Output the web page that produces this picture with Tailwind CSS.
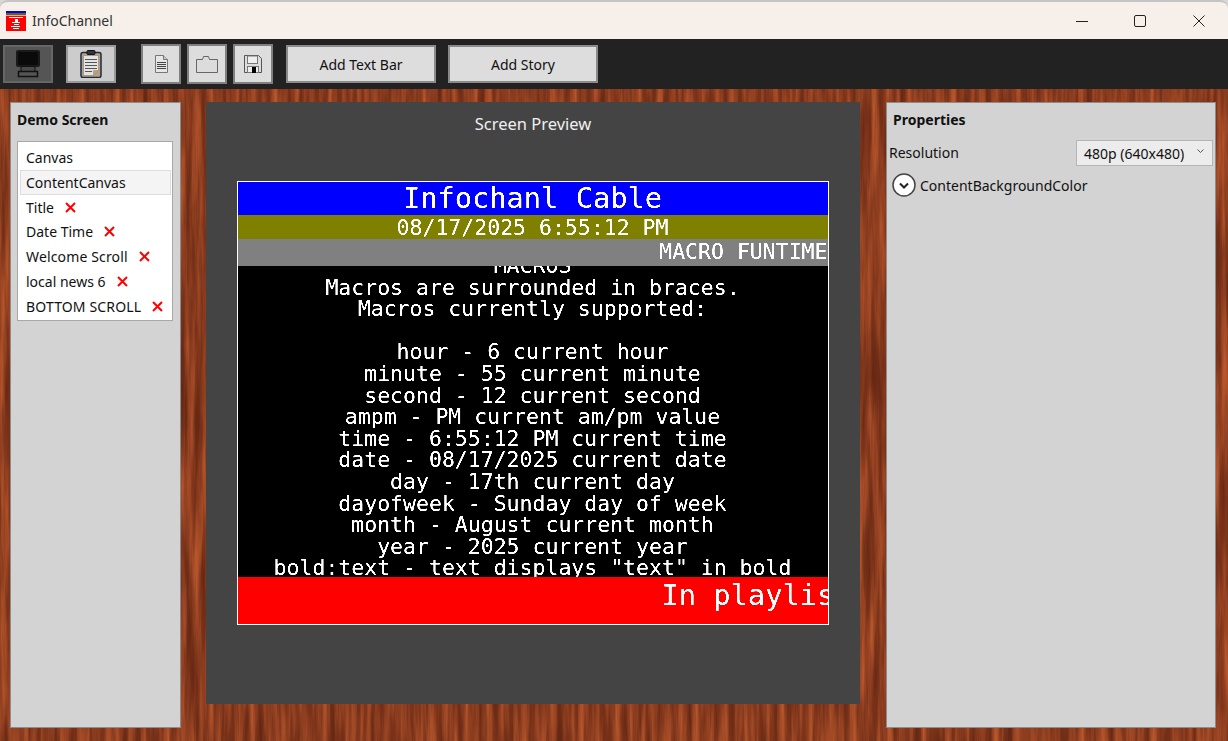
<!DOCTYPE html>
<html lang="en">
<head>
  <meta charset="UTF-8" />
  <title>InfoChannel</title>
  <script src="https://cdn.jsdelivr.net/npm/@tailwindcss/browser@4"></script>
</head>
<body class="bg-[#d8d8d8] w-[1228px] h-[741px] overflow-hidden font-['Noto_Sans',sans-serif] text-[14px] text-[#111]">
  <!-- hard edged text for the preview, it is a bitmap font in the real app -->
  <svg class="absolute w-0 h-0">
    <filter id="px" x="0" y="0" width="100%" height="100%" color-interpolation-filters="sRGB">
      <feComponentTransfer><feFuncA type="linear" slope="3" intercept="-0.9"/></feComponentTransfer>
    </filter>
  </svg>

  <!-- title bar -->
  <div class="h-[39px] bg-[#f7f0ea] rounded-t-lg border-t-2 border-[#c4c4c4] flex items-center">
    <svg class="ml-[6px] w-[20px] h-[20px]" viewBox="0 0 20 20" shape-rendering="crispEdges">
      <rect width="20" height="20" fill="#f00"/>
      <rect width="20" height="2" fill="#00f"/>
      <rect y="2" width="20" height="2" fill="#5f6a10"/>
      <rect y="4" width="20" height="1" fill="#fff" opacity=".6"/>
      <rect x="3" y="6" width="14" height="1" fill="#fff"/>
      <rect x="9" y="8" width="3" height="3" fill="#fff"/>
      <rect x="6" y="11" width="8" height="1" fill="#fff"/>
      <rect x="8" y="13" width="5" height="1" fill="#fff"/>
      <rect x="5" y="15" width="9" height="1" fill="#fff"/>
      <rect x="7" y="17" width="6" height="1" fill="#fff"/>
    </svg>
    <span class="ml-[6px] text-[14px] text-[#333]">InfoChannel</span>
    <div class="ml-auto mr-[6px] flex items-center">
      <svg class="w-[46px] h-[14px]" viewBox="0 0 46 14"><path d="M17 7.500h12" stroke="#222" fill="none"/></svg>
      <svg class="w-[46px] ml-[12px] h-[14px]" viewBox="0 0 46 14"><rect x="17.500" y="1.500" width="11" height="11" rx="1.500" stroke="#222" fill="none"/></svg>
      <svg class="w-[46px] ml-[13px] h-[14px]" viewBox="0 0 46 14"><path d="M17.500 1.500l11 11M28.500 1.500l-11 11" stroke="#222" fill="none"/></svg>
    </div>
  </div>

  <!-- toolbar -->
  <div class="h-[50px] bg-[#222] flex items-center pl-[3px] pb-[1px]">
    <button class="w-[50px] h-[38px] bg-[#555] border-2 border-[#666] flex items-center justify-center">
      <svg class="w-[26px] h-[28px]" viewBox="0 0 26 28">
        <rect x="2" y="1" width="22" height="15" rx="1" fill="#0a0a0a" stroke="#1a1a1a" stroke-width="2"/>
        <path d="M6 16.500h14v5h-14z" fill="#4a4a4a" stroke="#111"/>
        <rect x="3.500" y="21.500" width="19" height="5" fill="#555" stroke="#111" stroke-width="1.500"/>
      </svg>
    </button>
    <button class="ml-[13px] w-[50px] h-[38px] bg-[#ccc] border-2 border-[#999] flex items-center justify-center">
      <svg class="w-[22px] h-[28px]" viewBox="0 0 22 28">
        <rect x="1" y="2.500" width="20" height="25" rx="2" fill="#b9a27a" stroke="#1c2a44" stroke-width="1.500"/>
        <path d="M3.500 5.500h15v15l-5 5h-10z" fill="#e4e4e4" stroke="#777" stroke-width=".5"/>
        <rect x="7" y=".5" width="8" height="4" rx="1" fill="#334" stroke="#111"/>
        <path d="M5 9.500h12M5 12.500h12M5 15.500h12M5 18.500h12M5 21.500h7" stroke="#555"/>
        <path d="M13.500 25.500l5-5h-5z" fill="#c9a063" stroke="#888" stroke-width=".5"/>
      </svg>
    </button>
    <button class="ml-[25px] w-[40px] h-[40px] bg-[#ddd] border-2 border-[#808080] flex items-center justify-center">
      <svg class="w-[13px] h-[18px]" viewBox="0 0 13 18">
        <path d="M.5 .5h8l4 4v13h-12z" fill="#e6e6e6" stroke="#777"/>
        <path d="M8.500 .5v4h4" fill="#ccc" stroke="#777"/>
        <path d="M2 7.500h9M2 9.500h9M2 11.500h9M2 13.500h9" stroke="#444"/>
      </svg>
    </button>
    <button class="ml-[6px] w-[40px] h-[40px] bg-[#ddd] border-2 border-[#808080] flex items-center justify-center">
      <svg class="w-[22px] h-[18px]" viewBox="0 0 22 18">
        <path d="M.5 4.500h6l1-3h5l1 3h8v13h-21z" fill="#dcdcdc" stroke="#666"/>
      </svg>
    </button>
    <button class="ml-[6px] w-[40px] h-[40px] bg-[#ddd] border-2 border-[#808080] flex items-center justify-center">
      <svg class="w-[18px] h-[18px]" viewBox="0 0 18 18">
        <path d="M.5 .5h14l3 3v14h-17z" fill="#ddd" stroke="#555"/>
        <rect x="3.500" y="1" width="10" height="7.500" fill="#eee" stroke="#777"/>
        <rect x="3.500" y="11.500" width="11" height="6" fill="#eee" stroke="#777"/>
        <rect x="8" y="12" width="4" height="6" fill="#000"/>
      </svg>
    </button>
    <button class="ml-[13px] w-[150px] h-[38px] pt-[1px] bg-[#ddd] border-2 border-[#8a8a8a] text-[14px]">Add Text Bar</button>
    <button class="ml-[12px] w-[150px] h-[38px] pt-[1px] bg-[#ddd] border-2 border-[#8a8a8a] text-[14px]">Add Story</button>
  </div>

  <!-- main -->
  <div class="relative h-[652px] overflow-hidden">
    <svg class="absolute inset-0 w-full h-full" xmlns="http://www.w3.org/2000/svg">
      <filter id="wood" x="0" y="0" width="100%" height="100%" color-interpolation-filters="sRGB">
        <feTurbulence type="fractalNoise" baseFrequency="0.14 0.008" numOctaves="4" seed="7"/>
        <feColorMatrix type="matrix" values="1 0 0 0 0  1 0 0 0 0  1 0 0 0 0  0 0 0 0 1"/>
        <feComponentTransfer>
          <feFuncR type="table" tableValues="0.36 0.40 0.48 0.60 0.72 0.78"/>
          <feFuncG type="table" tableValues="0.15 0.16 0.20 0.27 0.34 0.38"/>
          <feFuncB type="table" tableValues="0.07 0.08 0.10 0.14 0.17 0.20"/>
        </feComponentTransfer>
      </filter>
      <rect width="100%" height="100%" filter="url(#wood)"/>
    </svg>

    <div class="relative flex pl-[10px] pt-[13px] h-full">
      <!-- left panel -->
      <div class="w-[171px] h-[626px] bg-[#d3d3d3] border border-[#8c8c8c] px-[6px] pt-[7px]">
        <div class="font-bold text-[14px] leading-[20px]">Demo Screen</div>
        <div class="mt-[11px] mr-[1px] bg-white border border-[#a8a8a8] px-[2px] pt-[3px] pb-[1px] h-[180px]">
          <div class="h-[25px] px-[6px] flex items-center">Canvas</div>
          <div class="h-[25px] px-[5px] flex items-center bg-[#f4f4f4] border border-[#ddd] mr-[-1px]">ContentCanvas</div>
          <div class="h-[24.600px] px-[6px] flex items-center gap-[11px]">Title <svg class="w-[11px] h-[11px]" viewBox="0 0 11 11"><path d="M1 1l9 9M10 1l-9 9" stroke="#f00" stroke-width="2"/></svg></div>
          <div class="h-[24.600px] px-[6px] flex items-center gap-[11px]">Date Time <svg class="w-[11px] h-[11px]" viewBox="0 0 11 11"><path d="M1 1l9 9M10 1l-9 9" stroke="#f00" stroke-width="2"/></svg></div>
          <div class="h-[24.800px] px-[6px] flex items-center gap-[11px]"><span class="tracking-[0.15px]">Welcome Scroll</span> <svg class="w-[11px] h-[11px]" viewBox="0 0 11 11"><path d="M1 1l9 9M10 1l-9 9" stroke="#f00" stroke-width="2"/></svg></div>
          <div class="h-[24.800px] px-[6px] flex items-center gap-[11px]">local news 6 <svg class="w-[11px] h-[11px]" viewBox="0 0 11 11"><path d="M1 1l9 9M10 1l-9 9" stroke="#f00" stroke-width="2"/></svg></div>
          <div class="h-[24.800px] px-[6px] flex items-center gap-[11px] whitespace-nowrap"><span class="tracking-[0.15px]">BOTTOM SCROLL</span> <svg class="w-[11px] h-[11px]" viewBox="0 0 11 11"><path d="M1 1l9 9M10 1l-9 9" stroke="#f00" stroke-width="2"/></svg></div>
        </div>
      </div>

      <!-- center panel -->
      <div class="ml-[25px] w-[654px] h-[602px] bg-[#444] flex flex-col items-center">
        <div class="mt-[11px] text-[#f0f0f0] text-[16.500px] leading-[22px]">Screen Preview</div>
        <div class="mt-[46px] ml-[-1px] w-[592px] h-[444px] border border-white bg-black flex flex-col text-white font-['DejaVu_Sans_Mono',monospace] overflow-hidden whitespace-nowrap">
          <div class="h-[33px] bg-[#00f] text-center text-[28.700px] leading-[33px] shrink-0"><div class="[filter:url(#px)]">Infochanl Cable</div></div>
          <div class="h-[24px] bg-[#808000] text-center text-[21.500px] leading-[25px] shrink-0"><div class="[filter:url(#px)]">08/17/2025 6:55:12 PM</div></div>
          <div class="h-[27px] bg-[#808080] text-right text-[21.500px] leading-[25px] shrink-0"><div class="[filter:url(#px)]">MACRO FUNTIME</div></div>
          <div class="h-[311px] shrink-0 overflow-hidden text-center text-[21.500px] leading-[21.600px]">
            <div class="mt-[-11px] [filter:url(#px)]">
              <div>MACROS</div>
              <div>Macros are surrounded in braces.</div>
              <div>Macros currently supported:</div>
              <div class="h-[21.600px]"></div>
              <div>hour - 6 current hour</div>
              <div>minute - 55 current minute</div>
              <div>second - 12 current second</div>
              <div>ampm - PM current am/pm value</div>
              <div>time - 6:55:12 PM current time</div>
              <div>date - 08/17/2025 current date</div>
              <div>day - 17th current day</div>
              <div>dayofweek - Sunday day of week</div>
              <div>month - August current month</div>
              <div>year - 2025 current year</div>
              <div>bold:text - text displays "text" in bold</div>
            </div>
          </div>
          <div class="flex-1 bg-[#f00] pl-[424px] text-[28.700px] leading-[34px] pt-[1px] overflow-hidden"><div class="[filter:url(#px)]">In playlist</div></div>
        </div>
      </div>

      <!-- right panel -->
      <div class="ml-[26px] w-[330px] h-[626px] bg-[#d3d3d3] border border-[#8c8c8c] pt-[7px]">
        <div class="font-bold text-[14px] leading-[20px] pl-[6px]">Properties</div>
        <div class="mt-[10px] flex items-start justify-between pl-[2px] pr-[2px]">
          <span class="leading-[26px]">Resolution</span>
          <div class="w-[137px] h-[26px] bg-[#ececec] border border-[#b5b5b5] flex items-center pl-[7px] relative">
            480p (640x480)
            <svg class="absolute right-[8px] top-[8px] w-[7px] h-[5px]" viewBox="0 0 7 5"><path d="M.5 .5l3 3 3-3" stroke="#555" fill="none"/></svg>
          </div>
        </div>
        <div class="mt-[7px] pl-[5px] flex items-center gap-[4px]">
          <svg class="w-[24px] h-[24px]" viewBox="0 0 24 24">
            <circle cx="12" cy="12" r="11" fill="#fff" stroke="#444" stroke-width="1.500"/>
            <path d="M8 10.500l4 4 4-4" stroke="#222" stroke-width="2" fill="none"/>
          </svg>
          <span>ContentBackgroundColor</span>
        </div>
      </div>
    </div>
  </div>
</body>
</html>
